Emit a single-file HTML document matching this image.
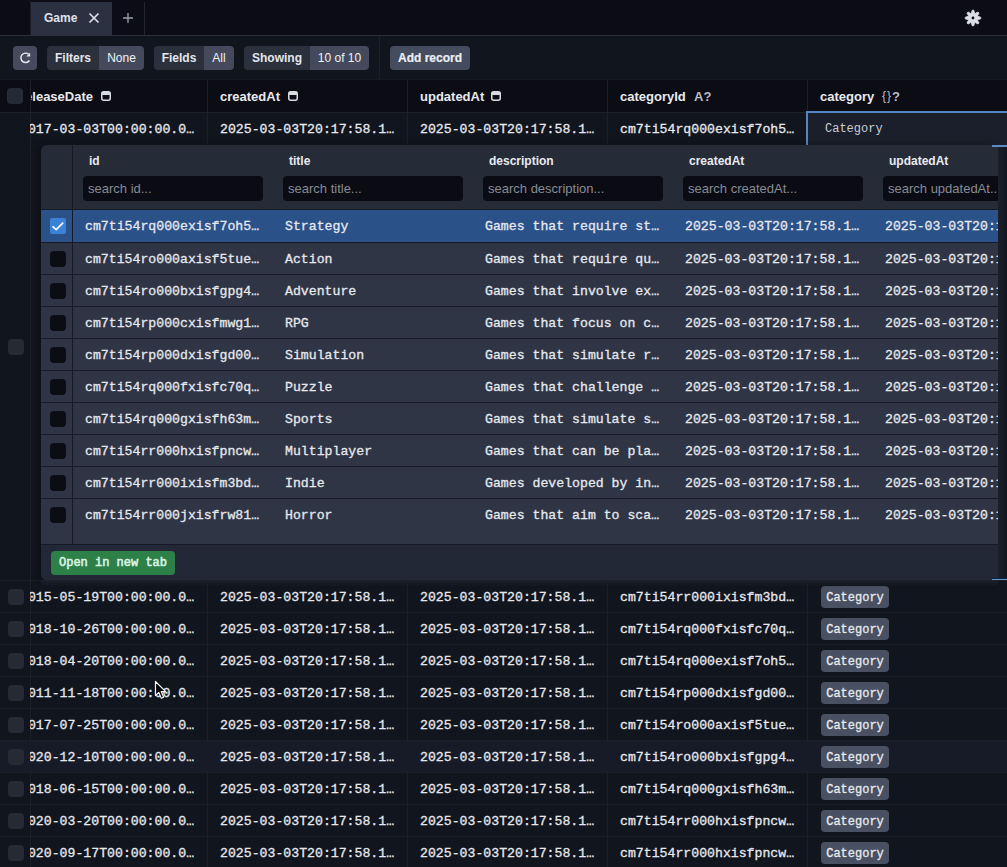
<!DOCTYPE html>
<html><head><meta charset="utf-8">
<style>
*{box-sizing:border-box}
html,body{margin:0;padding:0}
body{width:1007px;height:867px;overflow:hidden;position:relative;background:#11151d;font-family:"Liberation Sans",sans-serif;color:#e4e7ee}
.a{position:absolute}
.mono{font-family:"Liberation Mono",monospace}
#top{left:0;top:0;width:1007px;height:35px;background:#0b0c15}
#topline{left:0;top:35px;width:1007px;height:1px;background:#2b2f39}
#tab{left:31px;top:2px;width:81px;height:33px;background:#2c3142}
.tabtxt{left:44px;top:11px;font-weight:bold;font-size:12px;color:#dfe2ea}
#toolbar{left:0;top:36px;width:1007px;height:44px;background:#11151d}
.btn{position:absolute;top:46px;height:24px;border-radius:4px;overflow:hidden;font-size:12px;line-height:24px;color:#e4e6ec}
.btn .l{position:absolute;top:0;bottom:0;left:0;background:#2b303d;font-weight:bold;text-align:center}
.btn .r{position:absolute;top:0;bottom:0;right:0;background:#444a5c;text-align:center;color:#f0f2f6}
#hdr{left:0;top:80px;width:1007px;height:32px;background:#0b0c14}
.vl{position:absolute;width:1px;background:#1c2029}
.hl{position:absolute;height:1px;background:#1a1e27;left:0;width:1007px}
.hd{position:absolute;top:89px;font-weight:bold;font-size:13px;color:#e8eaef;white-space:nowrap}
.cell{position:absolute;font-family:"Liberation Mono",monospace;font-size:13.2px;color:#e6e8ee;white-space:nowrap;line-height:16px;-webkit-text-stroke:0.3px #e6e8ee}
.cb{position:absolute;width:16px;height:16px;border-radius:4px;background:#262a35}
.badge{position:absolute;left:821px;width:68px;height:22px;border-radius:4px;background:#485062;font-family:"Liberation Mono",monospace;font-size:12px;line-height:24px;color:#e8ebf0;text-align:center;-webkit-text-stroke:0.3px #e8ebf0}
#pop{left:41px;top:145px;width:957px;height:435px;background:#262b38;border-radius:6px 0 0 6px;overflow:hidden;box-shadow:-3px 0 8px rgba(0,0,0,.28)}
.pr{position:absolute;left:0;width:957px;height:32px;background:#2f3545;border-top:1px solid #151a26}
.pcell{position:absolute;top:9px;font-family:"Liberation Mono",monospace;font-size:13.2px;color:#e6e8ee;white-space:nowrap;line-height:16px;-webkit-text-stroke:0.3px #e6e8ee}
.pcb{position:absolute;left:9px;top:8px;width:16px;height:16px;border-radius:4px;background:#0b0c14}
.ph{position:absolute;top:9px;font-weight:bold;font-size:12px;color:#e8eaef}
.inp{position:absolute;top:31px;width:180px;height:25px;border-radius:4px;background:#0b0c13;font-size:13px;color:#878b95;line-height:25px;padding-left:5px;white-space:nowrap;overflow:hidden}
</style></head><body>
<!-- top bar -->
<div id="top" class="a"></div>
<div id="topline" class="a"></div>
<div class="a" style="left:30px;top:0;width:1px;height:35px;background:#1a1d27"></div>
<div id="tab" class="a"></div>
<div class="a tabtxt">Game</div>
<svg class="a" style="left:88px;top:12px" width="12" height="12" viewBox="0 0 12 12"><path d="M1.5 1.5L10.5 10.5M10.5 1.5L1.5 10.5" stroke="#dfe2ea" stroke-width="1.6" fill="none"/></svg>
<svg class="a" style="left:122px;top:12px" width="12" height="12" viewBox="0 0 12 12"><path d="M6 1V11M1 6H11" stroke="#9aa0ab" stroke-width="1.3" fill="none"/></svg>
<div class="a" style="left:144px;top:2px;width:1px;height:33px;background:#22262f"></div>
<svg class="a" style="left:964px;top:9px" width="18" height="18" viewBox="0 0 18 18"><path d="M7.32 4.40 L8.18 1.24 L9.82 1.24 L10.68 4.40 L11.07 4.56 L13.91 2.94 L15.06 4.09 L13.44 6.93 L13.60 7.32 L16.76 8.18 L16.76 9.82 L13.60 10.68 L13.44 11.07 L15.06 13.91 L13.91 15.06 L11.07 13.44 L10.68 13.60 L9.82 16.76 L8.18 16.76 L7.32 13.60 L6.93 13.44 L4.09 15.06 L2.94 13.91 L4.56 11.07 L4.40 10.68 L1.24 9.82 L1.24 8.18 L4.40 7.32 L4.56 6.93 L2.94 4.09 L4.09 2.94 L6.93 4.56Z" fill="#dcdfe6" stroke="#dcdfe6" stroke-width="0.8" stroke-linejoin="round"/><circle cx="9" cy="9" r="1.4" fill="#0b0c15"/></svg>

<!-- toolbar -->
<div id="toolbar" class="a"></div>
<div class="btn" style="left:13px;width:24px;background:#454b5d"></div>
<svg class="a" style="left:13px;top:46px" width="24" height="24" viewBox="0 0 24 24"><path d="M15.6 8.2A4.7 4.7 0 1 0 16.45 14.5" stroke="#e8eaf0" stroke-width="1.45" fill="none"/><path d="M13.3 10.6L17.1 10.6L17.1 6.8Z" fill="#e8eaf0"/></svg>
<div class="btn" style="left:47px;width:97px"><div class="l" style="width:52px">Filters</div><div class="r" style="width:45px">None</div></div>
<div class="btn" style="left:154px;width:80px"><div class="l" style="width:50px">Fields</div><div class="r" style="width:30px">All</div></div>
<div class="btn" style="left:244px;width:125px"><div class="l" style="width:66px">Showing</div><div class="r" style="width:59px">10 of 10</div></div>
<div class="a" style="left:379px;top:36px;width:1px;height:44px;background:#1c2029"></div>
<div class="btn" style="left:390px;width:80px;background:#454c5e;font-weight:bold;text-align:center;color:#eceef3;-webkit-text-stroke:0.2px #eceef3">Add record</div>
<div class="a" style="left:0;top:79px;width:1007px;height:1px;background:#161a22"></div>

<!-- header -->
<div id="hdr" class="a"></div>
<div class="cb" style="left:7px;top:88px"></div>
<div class="a" style="left:30px;top:80px;width:177px;height:32px;overflow:hidden"><div class="hd" style="top:9px;left:-10px">releaseDate</div><svg class="a" style="left:71px;top:11px" width="10" height="10" viewBox="0 0 10 10"><rect x="0.75" y="0.75" width="8.5" height="8.5" rx="2" fill="none" stroke="#d8dbe2" stroke-width="1.5"/><rect x="0.75" y="0.75" width="8.5" height="3.2" rx="1" fill="#d8dbe2"/></svg></div>
<div class="hd" style="left:220px">createdAt</div><svg class="a" style="left:288px;top:91px" width="10" height="10" viewBox="0 0 10 10"><rect x="0.75" y="0.75" width="8.5" height="8.5" rx="2" fill="none" stroke="#d8dbe2" stroke-width="1.5"/><rect x="0.75" y="0.75" width="8.5" height="3.2" rx="1" fill="#d8dbe2"/></svg>
<div class="hd" style="left:420px">updatedAt</div><svg class="a" style="left:491px;top:91px" width="10" height="10" viewBox="0 0 10 10"><rect x="0.75" y="0.75" width="8.5" height="8.5" rx="2" fill="none" stroke="#d8dbe2" stroke-width="1.5"/><rect x="0.75" y="0.75" width="8.5" height="3.2" rx="1" fill="#d8dbe2"/></svg>
<div class="hd" style="left:620px">categoryId</div><div class="hd" style="left:694px;color:#b9bdc6">A?</div>
<div class="hd" style="left:820px">category</div><div class="hd" style="left:882px;color:#b9bdc6"><span style="font-weight:normal;font-size:12px;letter-spacing:1px;position:relative;top:-1px">{}</span>?</div>
<div class="vl" style="left:30px;top:80px;height:787px"></div>
<div class="vl" style="left:207px;top:80px;height:787px"></div>
<div class="vl" style="left:407px;top:80px;height:787px"></div>
<div class="vl" style="left:607px;top:80px;height:787px"></div>
<div class="vl" style="left:807px;top:80px;height:787px"></div>
<div class="hl" style="top:112px;background:#1c2029"></div>
<div class="cell" style="left:20px;top:122px;clip-path:inset(0 0 0 10px)">2017-03-03T00:00:00.0…</div>
<div class="cell" style="left:220px;top:122px">2025-03-03T20:17:58.1…</div>
<div class="cell" style="left:420px;top:122px">2025-03-03T20:17:58.1…</div>
<div class="cell" style="left:620px;top:122px">cm7ti54rq000exisf7oh5…</div>
<div class="cb" style="left:8px;top:339px"></div>
<div class="a" style="left:806px;top:111px;width:210px;height:469px;border:2px solid #5586c0;border-bottom:0;background:#1a1f2b"></div><div class="a" style="left:998px;top:147px;width:9px;height:432px;background:linear-gradient(to right,#1c212d,#121721)"></div>
<div class="cell" style="left:825px;top:121px;font-size:12px;color:#c9cdd5;-webkit-text-stroke:0">Category</div>

<div class="hl" style="top:580px"></div>
<div class="cb" style="left:8px;top:589px"></div>
<div class="cell" style="left:20px;top:590px;clip-path:inset(0 0 0 10px)">2015-05-19T00:00:00.0…</div>
<div class="cell" style="left:220px;top:590px">2025-03-03T20:17:58.1…</div>
<div class="cell" style="left:420px;top:590px">2025-03-03T20:17:58.1…</div>
<div class="cell" style="left:620px;top:590px">cm7ti54rr000ixisfm3bd…</div>
<div class="badge" style="top:586px">Category</div>
<div class="hl" style="top:612px"></div>
<div class="cb" style="left:8px;top:621px"></div>
<div class="cell" style="left:20px;top:622px;clip-path:inset(0 0 0 10px)">2018-10-26T00:00:00.0…</div>
<div class="cell" style="left:220px;top:622px">2025-03-03T20:17:58.1…</div>
<div class="cell" style="left:420px;top:622px">2025-03-03T20:17:58.1…</div>
<div class="cell" style="left:620px;top:622px">cm7ti54rq000fxisfc70q…</div>
<div class="badge" style="top:618px">Category</div>
<div class="hl" style="top:644px"></div>
<div class="cb" style="left:8px;top:653px"></div>
<div class="cell" style="left:20px;top:654px;clip-path:inset(0 0 0 10px)">2018-04-20T00:00:00.0…</div>
<div class="cell" style="left:220px;top:654px">2025-03-03T20:17:58.1…</div>
<div class="cell" style="left:420px;top:654px">2025-03-03T20:17:58.1…</div>
<div class="cell" style="left:620px;top:654px">cm7ti54rq000exisf7oh5…</div>
<div class="badge" style="top:650px">Category</div>
<div class="hl" style="top:676px"></div>
<div class="cb" style="left:8px;top:685px"></div>
<div class="cell" style="left:20px;top:686px;clip-path:inset(0 0 0 10px)">2011-11-18T00:00:00.0…</div>
<div class="cell" style="left:220px;top:686px">2025-03-03T20:17:58.1…</div>
<div class="cell" style="left:420px;top:686px">2025-03-03T20:17:58.1…</div>
<div class="cell" style="left:620px;top:686px">cm7ti54rp000dxisfgd00…</div>
<div class="badge" style="top:682px">Category</div>
<div class="hl" style="top:708px"></div>
<div class="cb" style="left:8px;top:717px"></div>
<div class="cell" style="left:20px;top:718px;clip-path:inset(0 0 0 10px)">2017-07-25T00:00:00.0…</div>
<div class="cell" style="left:220px;top:718px">2025-03-03T20:17:58.1…</div>
<div class="cell" style="left:420px;top:718px">2025-03-03T20:17:58.1…</div>
<div class="cell" style="left:620px;top:718px">cm7ti54ro000axisf5tue…</div>
<div class="badge" style="top:714px">Category</div>
<div class="a" style="left:0;top:740px;width:1007px;height:32px;background:#171b27;"></div>
<div class="hl" style="top:740px"></div>
<div class="cb" style="left:8px;top:749px"></div>
<div class="cell" style="left:20px;top:750px;clip-path:inset(0 0 0 10px)">2020-12-10T00:00:00.0…</div>
<div class="cell" style="left:220px;top:750px">2025-03-03T20:17:58.1…</div>
<div class="cell" style="left:420px;top:750px">2025-03-03T20:17:58.1…</div>
<div class="cell" style="left:620px;top:750px">cm7ti54ro000bxisfgpg4…</div>
<div class="badge" style="top:746px">Category</div>
<div class="hl" style="top:772px"></div>
<div class="cb" style="left:8px;top:781px"></div>
<div class="cell" style="left:20px;top:782px;clip-path:inset(0 0 0 10px)">2018-06-15T00:00:00.0…</div>
<div class="cell" style="left:220px;top:782px">2025-03-03T20:17:58.1…</div>
<div class="cell" style="left:420px;top:782px">2025-03-03T20:17:58.1…</div>
<div class="cell" style="left:620px;top:782px">cm7ti54rq000gxisfh63m…</div>
<div class="badge" style="top:778px">Category</div>
<div class="hl" style="top:804px"></div>
<div class="cb" style="left:8px;top:813px"></div>
<div class="cell" style="left:20px;top:814px;clip-path:inset(0 0 0 10px)">2020-03-20T00:00:00.0…</div>
<div class="cell" style="left:220px;top:814px">2025-03-03T20:17:58.1…</div>
<div class="cell" style="left:420px;top:814px">2025-03-03T20:17:58.1…</div>
<div class="cell" style="left:620px;top:814px">cm7ti54rr000hxisfpncw…</div>
<div class="badge" style="top:810px">Category</div>
<div class="hl" style="top:836px"></div>
<div class="cb" style="left:8px;top:845px"></div>
<div class="cell" style="left:20px;top:846px;clip-path:inset(0 0 0 10px)">2020-09-17T00:00:00.0…</div>
<div class="cell" style="left:220px;top:846px">2025-03-03T20:17:58.1…</div>
<div class="cell" style="left:420px;top:846px">2025-03-03T20:17:58.1…</div>
<div class="cell" style="left:620px;top:846px">cm7ti54rr000hxisfpncw…</div>
<div class="badge" style="top:842px">Category</div>
<div id="pop" class="a">
<div class="a" style="left:31px;top:0;width:1px;height:64px;background:#151a26"></div>
<div class="ph" style="left:48px">id</div>
<div class="inp" style="left:42px">search id...</div>
<div class="ph" style="left:248px">title</div>
<div class="inp" style="left:242px">search title...</div>
<div class="ph" style="left:448px">description</div>
<div class="inp" style="left:442px">search description...</div>
<div class="ph" style="left:648px">createdAt</div>
<div class="inp" style="left:642px">search createdAt...</div>
<div class="ph" style="left:848px">updatedAt</div>
<div class="inp" style="left:842px">search updatedAt...</div>
<div class="pr" style="top:64px;height:33px;background:#2b5189">
<div class="pcb" style="background:#3b82d6;border-radius:2px"><svg width="16" height="16" viewBox="0 0 16 16"><path d="M2.5 8.3L6.2 11.6L13.2 4.6" stroke="#f4f8ff" stroke-width="1.8" fill="none"/></svg></div>
<div class="a" style="left:31px;top:0;bottom:0;width:1px;background:#151a26"></div>
<div class="pcell" style="left:44px">cm7ti54rq000exisf7oh5…</div>
<div class="pcell" style="left:244px">Strategy</div>
<div class="pcell" style="left:444px">Games that require st…</div>
<div class="pcell" style="left:644px">2025-03-03T20:17:58.1…</div>
<div class="pcell" style="left:844px">2025-03-03T20:17:58.1…</div>
</div>
<div class="pr" style="top:97px;height:32px;background:#2f3545">
<div class="pcb"></div>
<div class="a" style="left:31px;top:0;bottom:0;width:1px;background:#151a26"></div>
<div class="pcell" style="left:44px">cm7ti54ro000axisf5tue…</div>
<div class="pcell" style="left:244px">Action</div>
<div class="pcell" style="left:444px">Games that require qu…</div>
<div class="pcell" style="left:644px">2025-03-03T20:17:58.1…</div>
<div class="pcell" style="left:844px">2025-03-03T20:17:58.1…</div>
</div>
<div class="pr" style="top:129px;height:32px;background:#2f3545">
<div class="pcb"></div>
<div class="a" style="left:31px;top:0;bottom:0;width:1px;background:#151a26"></div>
<div class="pcell" style="left:44px">cm7ti54ro000bxisfgpg4…</div>
<div class="pcell" style="left:244px">Adventure</div>
<div class="pcell" style="left:444px">Games that involve ex…</div>
<div class="pcell" style="left:644px">2025-03-03T20:17:58.1…</div>
<div class="pcell" style="left:844px">2025-03-03T20:17:58.1…</div>
</div>
<div class="pr" style="top:161px;height:32px;background:#2f3545">
<div class="pcb"></div>
<div class="a" style="left:31px;top:0;bottom:0;width:1px;background:#151a26"></div>
<div class="pcell" style="left:44px">cm7ti54rp000cxisfmwg1…</div>
<div class="pcell" style="left:244px">RPG</div>
<div class="pcell" style="left:444px">Games that focus on c…</div>
<div class="pcell" style="left:644px">2025-03-03T20:17:58.1…</div>
<div class="pcell" style="left:844px">2025-03-03T20:17:58.1…</div>
</div>
<div class="pr" style="top:193px;height:32px;background:#2f3545">
<div class="pcb"></div>
<div class="a" style="left:31px;top:0;bottom:0;width:1px;background:#151a26"></div>
<div class="pcell" style="left:44px">cm7ti54rp000dxisfgd00…</div>
<div class="pcell" style="left:244px">Simulation</div>
<div class="pcell" style="left:444px">Games that simulate r…</div>
<div class="pcell" style="left:644px">2025-03-03T20:17:58.1…</div>
<div class="pcell" style="left:844px">2025-03-03T20:17:58.1…</div>
</div>
<div class="pr" style="top:225px;height:32px;background:#2f3545">
<div class="pcb"></div>
<div class="a" style="left:31px;top:0;bottom:0;width:1px;background:#151a26"></div>
<div class="pcell" style="left:44px">cm7ti54rq000fxisfc70q…</div>
<div class="pcell" style="left:244px">Puzzle</div>
<div class="pcell" style="left:444px">Games that challenge …</div>
<div class="pcell" style="left:644px">2025-03-03T20:17:58.1…</div>
<div class="pcell" style="left:844px">2025-03-03T20:17:58.1…</div>
</div>
<div class="pr" style="top:257px;height:32px;background:#2f3545">
<div class="pcb"></div>
<div class="a" style="left:31px;top:0;bottom:0;width:1px;background:#151a26"></div>
<div class="pcell" style="left:44px">cm7ti54rq000gxisfh63m…</div>
<div class="pcell" style="left:244px">Sports</div>
<div class="pcell" style="left:444px">Games that simulate s…</div>
<div class="pcell" style="left:644px">2025-03-03T20:17:58.1…</div>
<div class="pcell" style="left:844px">2025-03-03T20:17:58.1…</div>
</div>
<div class="pr" style="top:289px;height:32px;background:#2f3545">
<div class="pcb"></div>
<div class="a" style="left:31px;top:0;bottom:0;width:1px;background:#151a26"></div>
<div class="pcell" style="left:44px">cm7ti54rr000hxisfpncw…</div>
<div class="pcell" style="left:244px">Multiplayer</div>
<div class="pcell" style="left:444px">Games that can be pla…</div>
<div class="pcell" style="left:644px">2025-03-03T20:17:58.1…</div>
<div class="pcell" style="left:844px">2025-03-03T20:17:58.1…</div>
</div>
<div class="pr" style="top:321px;height:32px;background:#2f3545">
<div class="pcb"></div>
<div class="a" style="left:31px;top:0;bottom:0;width:1px;background:#151a26"></div>
<div class="pcell" style="left:44px">cm7ti54rr000ixisfm3bd…</div>
<div class="pcell" style="left:244px">Indie</div>
<div class="pcell" style="left:444px">Games developed by in…</div>
<div class="pcell" style="left:644px">2025-03-03T20:17:58.1…</div>
<div class="pcell" style="left:844px">2025-03-03T20:17:58.1…</div>
</div>
<div class="pr" style="top:353px;height:46px;background:#2f3545">
<div class="pcb"></div>
<div class="a" style="left:31px;top:0;bottom:0;width:1px;background:#151a26"></div>
<div class="pcell" style="left:44px">cm7ti54rr000jxisfrw81…</div>
<div class="pcell" style="left:244px">Horror</div>
<div class="pcell" style="left:444px">Games that aim to sca…</div>
<div class="pcell" style="left:644px">2025-03-03T20:17:58.1…</div>
<div class="pcell" style="left:844px">2025-03-03T20:17:58.1…</div>
</div>
<div class="a" style="left:0;top:399px;width:957px;height:1px;background:#151a26"></div><div class="a" style="left:0;top:400px;width:957px;height:35px;background:#232836"></div>
<div class="a" style="left:10px;top:406px;width:124px;height:24px;border-radius:4px;background:#2e8049;font-family:Liberation Mono,monospace;font-size:12px;line-height:25px;color:#dcf5e1;-webkit-text-stroke:0.55px #dcf5e1;text-align:center">Open in new tab</div>
</div>
<div class="a" style="left:992px;top:145px;width:15px;height:2px;background:#5a8cc8"></div>
<div class="a" style="left:992px;top:578px;width:15px;height:1px;background:#062040"></div><div class="a" style="left:992px;top:579px;width:15px;height:1px;background:#6c98cc"></div>
<svg class="a" style="left:154px;top:680px" width="14" height="22" viewBox="0 0 14 22"><path d="M1.5 1.5L1.5 15.5L4.8 12.4L7.3 18.2L9.6 17.2L7.2 11.6L11.6 11.6Z" fill="#000" stroke="#f2f2f2" stroke-width="1.2" stroke-linejoin="round"/></svg>
<div class="a" style="left:41px;top:580px;width:957px;height:7px;background:linear-gradient(#1c212c,rgba(18,22,30,0))"></div>
</body></html>
